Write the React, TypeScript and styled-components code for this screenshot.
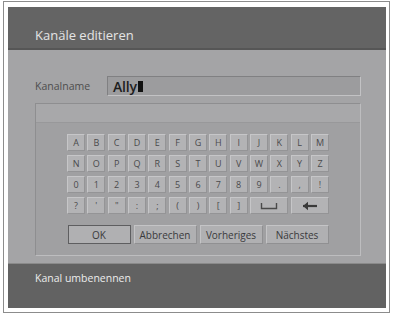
import styled, { createGlobalStyle } from "styled-components";

const GlobalStyle = createGlobalStyle`
  html, body {
    margin: 0;
    padding: 0;
    background: #ffffff;
  }
  body {
    font-family: "Open Sans", "DejaVu Sans", sans-serif;
  }
`;

const rows: string[][] = [
  ["A", "B", "C", "D", "E", "F", "G", "H", "I", "J", "K", "L", "M"],
  ["N", "O", "P", "Q", "R", "S", "T", "U", "V", "W", "X", "Y", "Z"],
  ["0", "1", "2", "3", "4", "5", "6", "7", "8", "9", ".", ",", "!"],
  ["?", "'", "\"", ":", ";", "(", ")", "[", "]"],
];

const actions = ["OK", "Abbrechen", "Vorheriges", "Nächstes"];

export default function App() {
  return (
    <>
      <GlobalStyle />
      <Page>
        <Frame>
          <Screen>
            <Header>
              <Title>Kanäle editieren</Title>
            </Header>
            <Body>
              <NameRow>
                <Label>Kanalname</Label>
                <NameField>
                  Ally
                  <Cursor />
                </NameField>
              </NameRow>
              <Keyboard>
                <KeyboardTop />
                <KeyGrid>
                  {rows.map((row) =>
                    row.map((k) => <Key key={k}>{k}</Key>)
                  )}
                  <Key $span={2}>
                    <svg width="18" height="8" viewBox="0 0 18 8">
                      <path d="M1.5 1v5.5h15V1" fill="none" stroke="#4a4a4a" strokeWidth="1.4" />
                    </svg>
                  </Key>
                  <Key $span={2}>
                    <svg width="16" height="10" viewBox="0 0 16 10">
                      <path d="M1 5h14" stroke="#3a3a3a" strokeWidth="2.2" />
                      <path d="M1 5l5-4.2v8.4z" fill="#3a3a3a" />
                    </svg>
                  </Key>
                </KeyGrid>
                <ActionRow>
                  {actions.map((a, i) => (
                    <ActionButton key={a} $focused={i === 0}>
                      {a}
                    </ActionButton>
                  ))}
                </ActionRow>
              </Keyboard>
            </Body>
            <Footer>
              <FooterText>Kanal umbenennen</FooterText>
            </Footer>
          </Screen>
        </Frame>
      </Page>
    </>
  );
}

const Page = styled.div`
  width: 393px;
  height: 315px;
  box-sizing: border-box;
  padding: 1px 0 0 3px;
  background: #ffffff;
  overflow: hidden;
`;

const Frame = styled.div`
  width: 387px;
  height: 312px;
  box-sizing: border-box;
  border: 1px solid #8c8c8c;
  padding: 5px 2px 3px 4px;
`;

const Screen = styled.div`
  width: 378px;
  height: 301px;
  display: flex;
  flex-direction: column;
  background: #a4a4a6;
`;

const Header = styled.div`
  height: 43px;
  background: #646464;
  border-bottom: 2px solid #565656;
  display: flex;
  align-items: flex-end;
  padding: 0 0 5px 27px;
  box-sizing: border-box;
`;

const Title = styled.div`
  color: #e4e4e4;
  font-size: 13px;
  line-height: 16px;
`;

const Body = styled.div`
  flex: 1;
  display: flex;
  flex-direction: column;
  padding: 26px 25px 7px 27px;
  gap: 7px;
  box-sizing: border-box;
`;

const NameRow = styled.div`
  display: flex;
  align-items: center;
  height: 20px;
`;

const Label = styled.div`
  width: 72px;
  color: #4e4e4e;
  font-size: 10.5px;
`;

const NameField = styled.div`
  flex: 1;
  height: 20px;
  box-sizing: border-box;
  background: #9c9c9e;
  border: 1px solid;
  border-color: #808082 #c2c2c4 #c2c2c4 #808082;
  display: flex;
  align-items: center;
  padding-left: 5px;
  font-size: 14px;
  font-weight: 600;
  letter-spacing: -0.2px;
  color: #1e1e1e;
`;

const Cursor = styled.span`
  display: inline-block;
  width: 5px;
  height: 11px;
  margin-left: 1px;
  background: #111111;
`;

const Keyboard = styled.div`
  flex: 1;
  box-sizing: border-box;
  border: 1px solid;
  border-color: #8e8e90 #bdbdbf #bdbdbf #8e8e90;
  background: #a0a0a2;
  display: flex;
  flex-direction: column;
  align-items: center;
`;

const KeyboardTop = styled.div`
  align-self: stretch;
  height: 18px;
  background: #a8a8aa;
  border-bottom: 1px solid #98989a;
  margin-bottom: 11px;
`;

const KeyGrid = styled.div`
  display: grid;
  grid-template-columns: repeat(13, 18px);
  grid-auto-rows: 17px;
  column-gap: 2.33px;
  row-gap: 4px;
`;

const Key = styled.div<{ $span?: number }>`
  grid-column: span ${(p) => p.$span ?? 1};
  box-sizing: border-box;
  background: #b3b3b5;
  border: 1px solid;
  border-color: #c6c6c8 #949496 #949496 #c6c6c8;
  display: flex;
  align-items: center;
  justify-content: center;
  font-size: 9px;
  color: #4a4a4c;
`;

const ActionRow = styled.div`
  margin-top: 11px;
  display: grid;
  grid-template-columns: repeat(4, 63px);
  column-gap: 3px;
`;

const ActionButton = styled.div<{ $focused?: boolean }>`
  height: 19px;
  box-sizing: border-box;
  background: #b0b0b2;
  border: 1px solid;
  border-color: ${(p) =>
    p.$focused ? "#5e5e60" : "#c4c4c6 #909092 #909092 #c4c4c6"};
  display: flex;
  align-items: center;
  justify-content: center;
  font-size: 10px;
  color: #3a3a3c;
`;

const Footer = styled.div`
  height: 45px;
  background: #626262;
  border-top: 1px solid #8a8a8a;
  padding: 7px 0 0 27px;
  box-sizing: border-box;
`;

const FooterText = styled.div`
  color: #ececec;
  font-size: 10.5px;
`;
